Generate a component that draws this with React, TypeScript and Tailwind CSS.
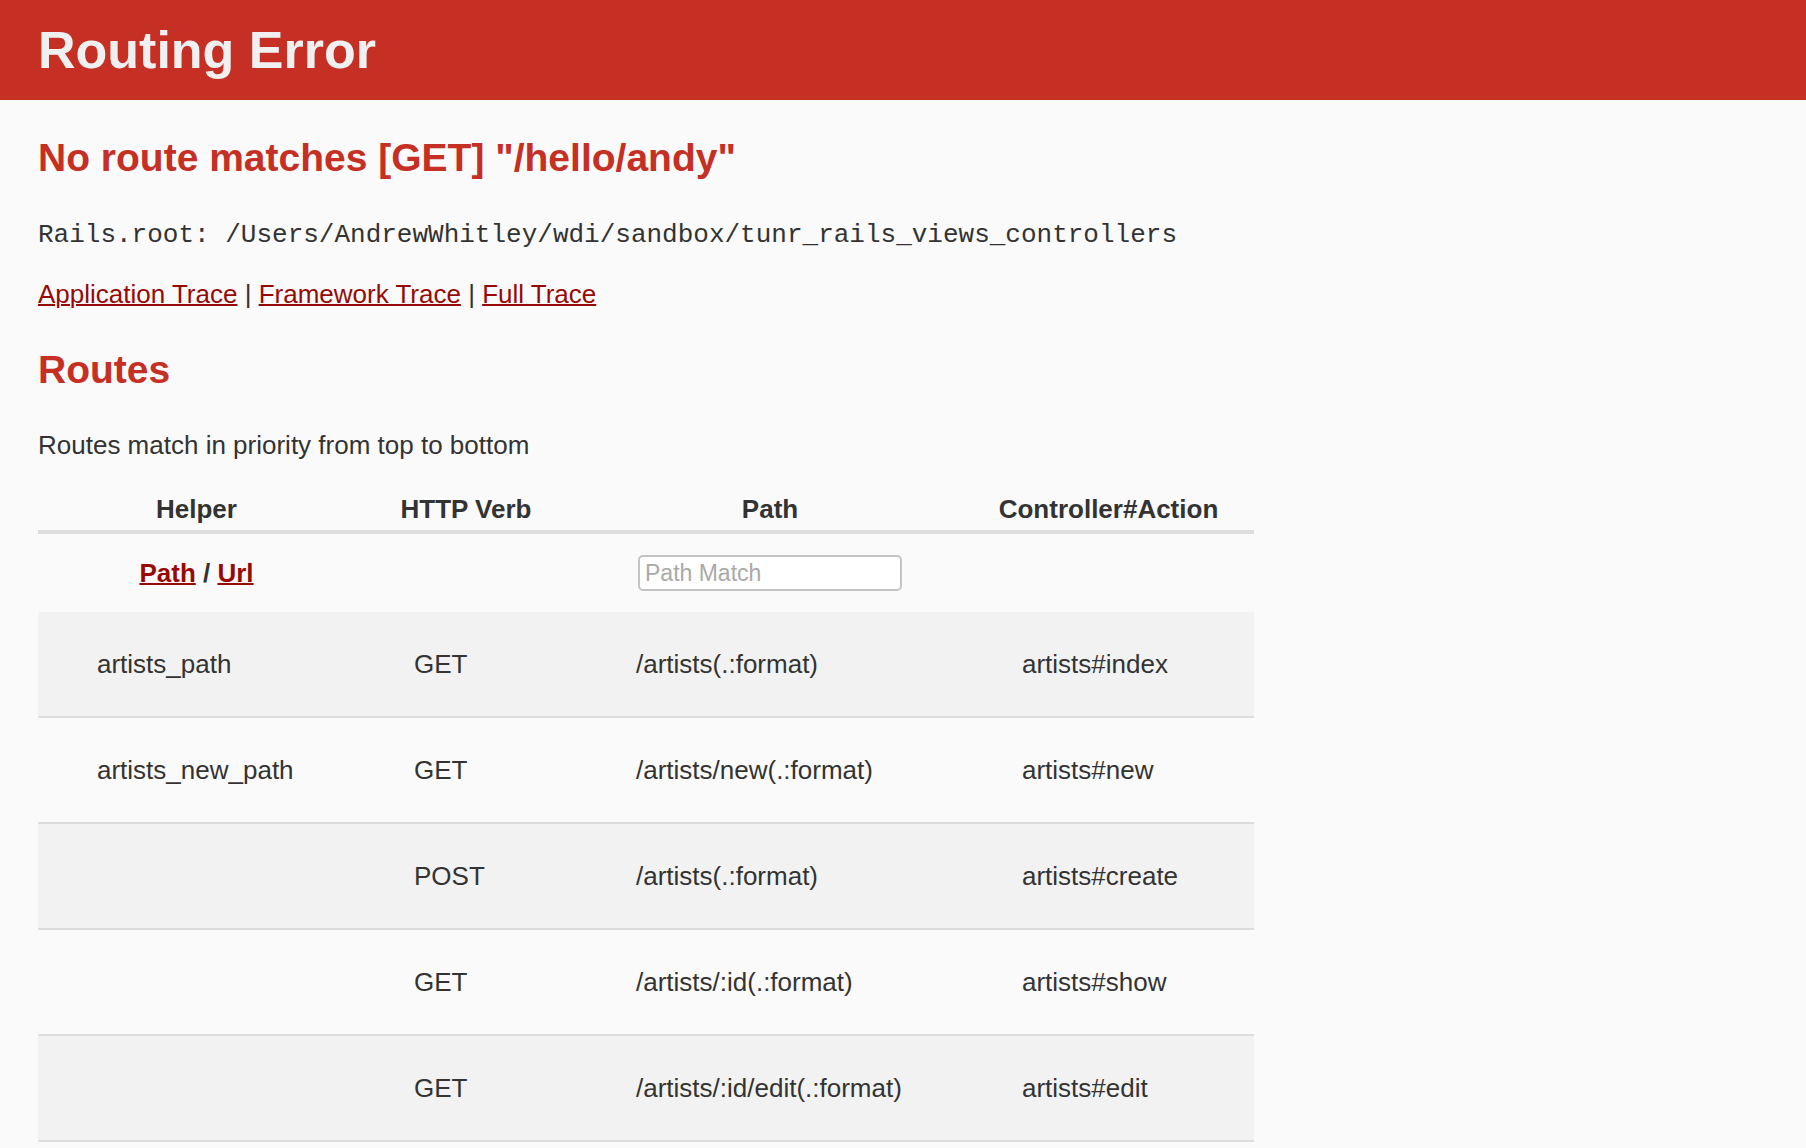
const routes = [
  { helper: 'artists_path', verb: 'GET', path: '/artists(.:format)', action: 'artists#index' },
  { helper: 'artists_new_path', verb: 'GET', path: '/artists/new(.:format)', action: 'artists#new' },
  { helper: '', verb: 'POST', path: '/artists(.:format)', action: 'artists#create' },
  { helper: '', verb: 'GET', path: '/artists/:id(.:format)', action: 'artists#show' },
  { helper: '', verb: 'GET', path: '/artists/:id/edit(.:format)', action: 'artists#edit' },
];

const cols = 'grid grid-cols-[317px_222px_386px_291px]';

export default function App() {
  return (
    <div className="min-h-screen bg-[#fafafa] font-['Liberation_Sans',Arial,sans-serif] text-[#333]">
      <header className="flex h-[100px] items-center bg-[#c52f24] px-[38px] text-[#f0f0f0]">
        <h1 className="text-[52px] font-bold leading-[57px]">Routing Error</h1>
      </header>

      <div className="px-[38px]">
        <h2 className="mt-[33px] text-[39px] font-bold leading-[50px] text-[#c52f24]">
          No route matches [GET] "/hello/andy"
        </h2>

        <p className="mt-[32px] font-['Liberation_Mono',monospace] text-[26px] leading-[40px]">
          Rails.root: /Users/AndrewWhitley/wdi/sandbox/tunr_rails_views_controllers
        </p>

        <div className="mt-[19px] text-[26px] leading-[40px]">
          <a href="#" className="text-[#980905] underline decoration-2">Application Trace</a>
          {' | '}
          <a href="#" className="text-[#980905] underline decoration-2">Framework Trace</a>
          {' | '}
          <a href="#" className="text-[#980905] underline decoration-2">Full Trace</a>
        </div>

        <h2 className="mt-[31px] text-[39px] font-bold leading-[50px] text-[#c52f24]">Routes</h2>

        <p className="mt-[30px] text-[26px] leading-[40px]">Routes match in priority from top to bottom</p>

        <div className="mt-[23px] w-[1216px] text-[26px]">
          <div className={`${cols} h-[46px] items-center border-b-4 border-[#ddd] text-center font-bold`}>
            <div>Helper</div>
            <div>HTTP Verb</div>
            <div>Path</div>
            <div>Controller#Action</div>
          </div>

          <div className={`${cols} h-[78px] items-center font-bold`}>
            <div className="text-center">
              <a href="#" className="text-[#980905] underline decoration-2">Path</a>
              {' / '}
              <a href="#" className="text-[#980905] underline decoration-2">Url</a>
            </div>
            <div />
            <div className="flex justify-center">
              <input
                type="text"
                placeholder="Path Match"
                className="h-[36px] w-[264px] rounded-[5px] border-2 border-[#c4c4c4] bg-white px-[5px] text-[23px] font-normal placeholder:text-[#a9a9a9] focus:outline-none"
              />
            </div>
            <div />
          </div>

          {routes.map((r, i) => (
            <div
              key={i}
              className={`${cols} h-[106px] items-center border-b-2 border-[#ddd] ${i % 2 === 0 ? 'bg-[#f2f2f2]' : ''}`}
            >
              <div className="pl-[59px]">{r.helper}</div>
              <div className="pl-[59px]">{r.verb}</div>
              <div className="pl-[59px]">{r.path}</div>
              <div className="pl-[59px]">{r.action}</div>
            </div>
          ))}
        </div>
      </div>
    </div>
  );
}
